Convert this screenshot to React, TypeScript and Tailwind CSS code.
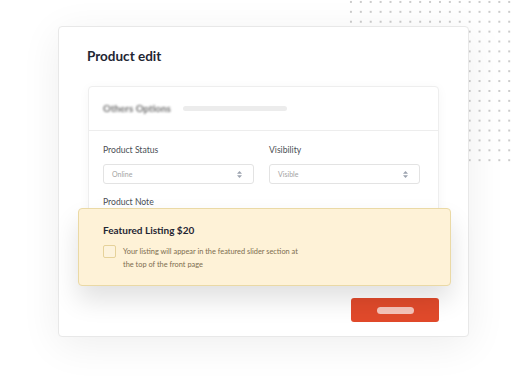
const UpDown = () => (
  <svg width="5" height="7" viewBox="0 0 5 7" fill="#9ca3af">
    <path d="M2.5 0 5 2.8H0z" />
    <path d="M2.5 7 0 4.2h5z" />
  </svg>
)

function SelectBox({ label, value }: { label: string; value: string }) {
  return (
    <div className="flex flex-col">
      <span className="text-[8.6px] leading-[12px] text-[#4b4f56]">{label}</span>
      <div className="mt-[8px] h-[20px] border border-[#e3e3e3] rounded-[3px] flex items-center justify-between pl-[8px] pr-[11px]">
        <span className="text-[7px] text-[#a3a3a3]">{value}</span>
        <UpDown />
      </div>
    </div>
  )
}

export default function App() {
  return (
    <div
      className="relative w-[528px] h-[378px] overflow-hidden bg-white pt-[26px] pl-[58px]"
      style={{ fontFamily: "Lato, 'Liberation Sans', sans-serif" }}
    >
      {/* dotted backdrop */}
      <div className="absolute left-[346px] top-[-3px] w-[170px] h-[168px] bg-[radial-gradient(circle,#cbcbcb_1.1px,transparent_1.5px)] bg-[size:9.9px_9.9px]" />

      {/* main card */}
      <div className="relative w-[411px] h-[311px] bg-white border border-[#e8e8e8] rounded-[4px] shadow-[0_8px_40px_rgba(0,0,0,0.07)] px-[29px] pt-[19px]">
        <h1 className="-ml-[1px] text-[13.5px] leading-[20px] font-bold text-[#1f2633]">Product edit</h1>

        {/* options card */}
        <div className="mt-[20px] h-[150px] overflow-hidden bg-white border border-[#eeeeee] rounded-[4px] shadow-[0_2px_12px_rgba(0,0,0,0.04)]">
          <div className="h-[44px] border-b border-[#ededed] flex items-center pl-[14px] gap-[12px]">
            <span className="text-[9.8px] font-bold text-[#6f6f6f] blur-[1.3px]">Others Options</span>
            <div className="w-[104px] h-[5px] rounded-full bg-[#ececec]" />
          </div>
          <div className="pl-[14px] pr-[18px] pt-[13px]">
            <div className="grid grid-cols-2 gap-[15px]">
              <SelectBox label="Product Status" value="Online" />
              <SelectBox label="Visibility" value="Visible" />
            </div>
            <div className="mt-[12px] text-[8.6px] leading-[12px] text-[#4b4f56]">Product Note</div>
            <div className="mt-[6px] h-[40px] border border-[#e3e3e3] rounded-[3px]" />
          </div>
        </div>

        {/* featured listing */}
        <div className="relative -mt-[28px] -ml-[10px] -mr-[12px] bg-[#fef2d7] border border-[#ead9a5] rounded-[4px] shadow-[0_14px_26px_rgba(0,0,0,0.12)] pl-[24px] pr-[20px] pt-[14px] pb-[14px]">
          <div className="text-[10px] leading-[14px] font-bold text-[#1f2633]">Featured Listing $20</div>
          <div className="mt-[8px] flex items-start gap-[7px]">
            <div className="w-[13px] h-[13px] shrink-0 border border-[#e6d29a] rounded-[2px] bg-[#fdf3dc]" />
            <p className="text-[7.4px] leading-[13px] text-[#7d6d4f] w-[180px]">
              Your listing will appear in the featured slider section at the top of the front page
            </p>
          </div>
        </div>

        {/* save button */}
        <div className="flex justify-end mt-[12px]">
          <button className="w-[88px] h-[24px] rounded-[3px] bg-[#e14a2b] flex items-center justify-center">
            <span className="w-[37px] h-[7px] rounded-full bg-[#f6c4ba]" />
          </button>
        </div>
      </div>
    </div>
  )
}
